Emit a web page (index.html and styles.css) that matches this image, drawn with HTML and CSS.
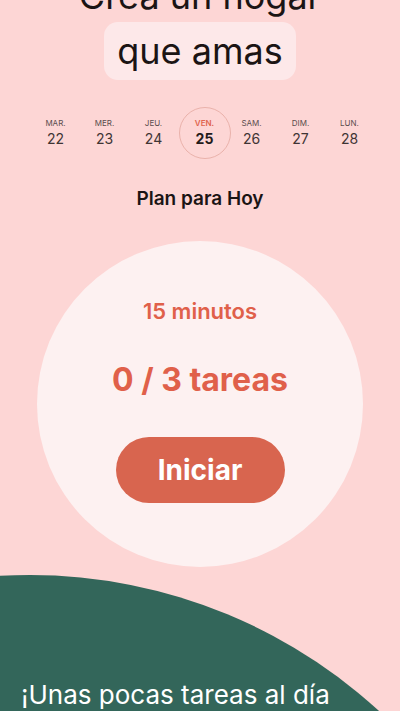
FILE: index.html
```html
<!DOCTYPE html>
<html>
<head>
  <title>Plan para Hoy</title>
  <link rel="stylesheet" href="styles.css">
</head>
<body>
  <div class="screen">
    <div class="blob"></div>

    <div class="hero">
      <div class="hero-line">Crea un hogar</div>
      <div class="hero-mark">que amas</div>
    </div>

    <div class="week">
      <div class="day"><span class="day-name">MAR.</span><span class="day-num">22</span></div>
      <div class="day"><span class="day-name">MER.</span><span class="day-num">23</span></div>
      <div class="day"><span class="day-name">JEU.</span><span class="day-num">24</span></div>
      <div class="day today"><span class="day-name">VEN.</span><span class="day-num">25</span></div>
      <div class="day"><span class="day-name">SAM.</span><span class="day-num">26</span></div>
      <div class="day"><span class="day-name">DIM.</span><span class="day-num">27</span></div>
      <div class="day"><span class="day-name">LUN.</span><span class="day-num">28</span></div>
    </div>

    <h2 class="plan-title">Plan para Hoy</h2>

    <div class="plan">
      <div class="plan-time">15 minutos</div>
      <div class="plan-count">0 / 3 tareas</div>
      <button class="start-button">Iniciar</button>
    </div>

    <p class="tagline">¡Unas pocas tareas al día</p>
  </div>
</body>
</html>
```

FILE: styles.css
```css
body {
  margin: 0;
  padding: 0;
  background: #fdd6d5;
  font-family: Inter, "Noto Sans", sans-serif;
  color: #1b1414;
}

.screen {
  position: relative;
  width: 400px;
  height: 711px;
  overflow: hidden;
}

/* big green shape at the bottom */
.blob {
  position: absolute;
  left: -486px;
  top: 575px;
  width: 1032px;
  height: 1032px;
  border-radius: 50%;
  background: #33665a;
}

.hero {
  margin-top: -26px;
  text-align: center;
  font-size: 36px;
  line-height: 44px;
}

.hero-mark {
  display: inline-block;
  margin-top: 4px;
  padding: 7px 13px;
  background: #fde8e9;
  border-radius: 14px;
}

.week {
  display: grid;
  grid-template-columns: repeat(7, 49px);
  margin-top: 27px;
  padding-left: 31px;
}

.day {
  height: 52px;
  display: flex;
  flex-direction: column;
  align-items: center;
  justify-content: center;
  gap: 2px;
}

.day-name {
  font-size: 8px;
  line-height: 10px;
  color: #5a4d4d;
}

.day-num {
  font-size: 14px;
  line-height: 18px;
  color: #3f3434;
}

.today {
  width: 52px;
  justify-self: center;
  margin-left: 4px;
  border: 1px solid #eab2ab;
  border-radius: 50%;
  box-sizing: border-box;
}

.today .day-name {
  color: #e0644d;
  font-weight: 600;
}

.today .day-num {
  color: #241a1a;
  font-weight: 700;
}

.plan-title {
  margin: 28px 0 0;
  text-align: center;
  font-size: 19px;
  line-height: 24px;
  font-weight: 600;
}

.plan {
  width: 326px;
  height: 326px;
  margin: 30px auto 0;
  border-radius: 50%;
  background: #fdf1f1;
  display: flex;
  flex-direction: column;
  align-items: center;
  color: #e0604a;
}

.plan-time {
  margin-top: 57px;
  font-size: 22px;
  line-height: 26px;
  font-weight: 600;
}

.plan-count {
  margin-top: 37px;
  font-size: 32px;
  line-height: 38px;
  font-weight: 700;
}

.start-button {
  margin-top: 38px;
  width: 169px;
  height: 66px;
  border: none;
  border-radius: 33px;
  background: #d8654f;
  color: #fff;
  font-family: inherit;
  font-size: 28px;
  font-weight: 700;
}

.tagline {
  position: relative;
  margin: 112px 0 0;
  padding-left: 21px;
  font-size: 26px;
  line-height: 32px;
  color: #fff;
  white-space: nowrap;
}
```
